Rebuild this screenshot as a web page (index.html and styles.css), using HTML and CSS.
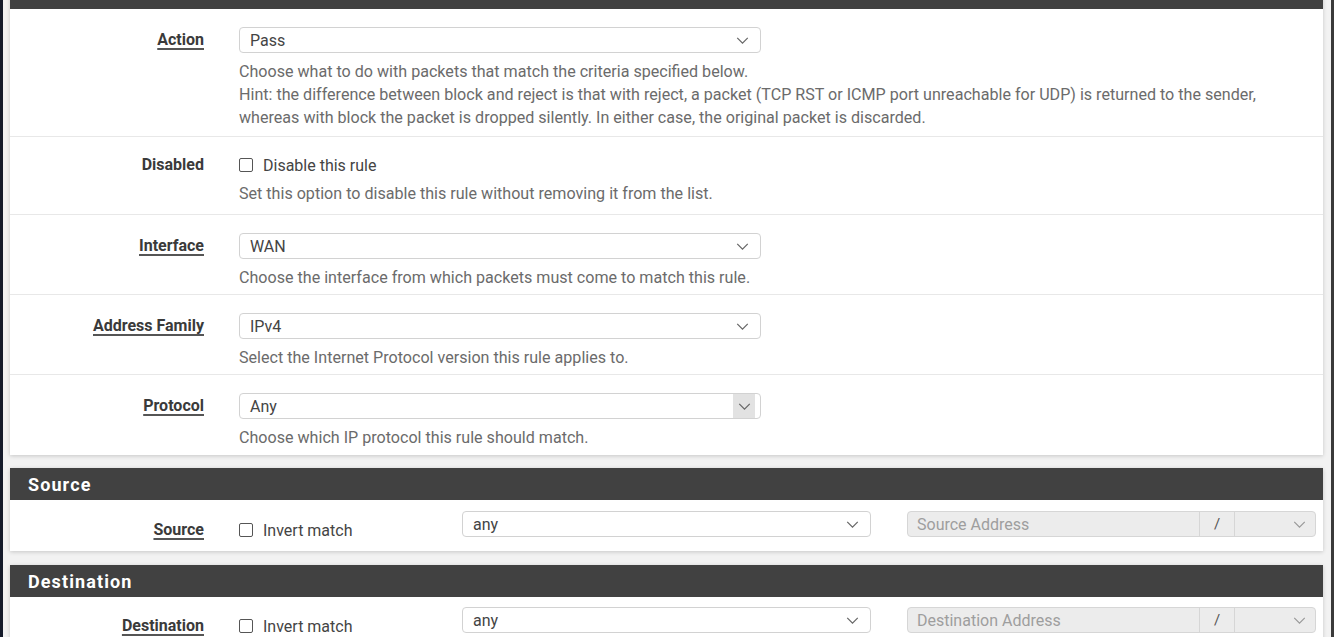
FILE: index.html
```html
<!DOCTYPE html>
<html lang="en">
<head>
<meta charset="utf-8">
<title>Edit Firewall Rule</title>
<link rel="stylesheet" href="styles.css">
</head>
<body>
<div class="page">
  <section class="panel panel-first">
    <div class="panel-heading"><h2>Edit Firewall Rule</h2></div>
    <div class="panel-body">
      <div class="row row-first">
        <div class="label"><span class="u">Action</span></div>
        <div class="control">
          <div class="select w-main"><span>Pass</span><svg class="chev" viewBox="0 0 14 8"><path d="M1 1l6 6 6-6"/></svg></div>
          <p class="help">Choose what to do with packets that match the criteria specified below.<br>Hint: the difference between block and reject is that with reject, a packet (TCP RST or ICMP port unreachable for UDP) is returned to the sender,<br>whereas with block the packet is dropped silently. In either case, the original packet is discarded.</p>
        </div>
      </div>
      <div class="row row-check">
        <div class="label label-check"><span>Disabled</span></div>
        <div class="control">
          <label class="check"><span class="box"></span>Disable this rule</label>
          <p class="help">Set this option to disable this rule without removing it from the list.</p>
        </div>
      </div>
      <div class="row">
        <div class="label"><span class="u">Interface</span></div>
        <div class="control">
          <div class="select w-main"><span>WAN</span><svg class="chev" viewBox="0 0 14 8"><path d="M1 1l6 6 6-6"/></svg></div>
          <p class="help">Choose the interface from which packets must come to match this rule.</p>
        </div>
      </div>
      <div class="row">
        <div class="label"><span class="u">Address Family</span></div>
        <div class="control">
          <div class="select w-main"><span>IPv4</span><svg class="chev" viewBox="0 0 14 8"><path d="M1 1l6 6 6-6"/></svg></div>
          <p class="help">Select the Internet Protocol version this rule applies to.</p>
        </div>
      </div>
      <div class="row row-last">
        <div class="label"><span class="u">Protocol</span></div>
        <div class="control">
          <div class="select w-main"><span>Any</span><span class="chev-box"><svg class="chev" viewBox="0 0 14 8"><path d="M1 1l6 6 6-6"/></svg></span></div>
          <p class="help">Choose which IP protocol this rule should match.</p>
        </div>
      </div>
    </div>
  </section>

  <section class="panel">
    <div class="panel-heading"><h2>Source</h2></div>
    <div class="panel-body">
      <div class="addr-row">
        <div class="label"><span class="u">Source</span></div>
        <label class="check check-addr"><span class="box"></span>Invert match</label>
        <div class="select w-type"><span>any</span><svg class="chev" viewBox="0 0 14 8"><path d="M1 1l6 6 6-6"/></svg></div>
        <div class="addr-group">
          <div class="addr-input">Source Address</div>
          <div class="addr-slash">/</div>
          <div class="addr-mask"><svg class="chev" viewBox="0 0 14 8"><path d="M1 1l6 6 6-6"/></svg></div>
        </div>
      </div>
    </div>
  </section>

  <section class="panel panel-dest">
    <div class="panel-heading"><h2>Destination</h2></div>
    <div class="panel-body">
      <div class="addr-row addr-row-dest">
        <div class="label"><span class="u">Destination</span></div>
        <label class="check check-addr"><span class="box"></span>Invert match</label>
        <div class="select w-type"><span>any</span><svg class="chev" viewBox="0 0 14 8"><path d="M1 1l6 6 6-6"/></svg></div>
        <div class="addr-group">
          <div class="addr-input">Destination Address</div>
          <div class="addr-slash">/</div>
          <div class="addr-mask"><svg class="chev" viewBox="0 0 14 8"><path d="M1 1l6 6 6-6"/></svg></div>
        </div>
      </div>
    </div>
  </section>
</div>
</body>
</html>
```

FILE: styles.css
```css
* { box-sizing: border-box; }
html, body { margin: 0; padding: 0; height: 100%; overflow: hidden; }
body {
  background: #f2f2f2;
  border-left: 3px solid #151b2b;
  border-right: 3px solid #3a3a3a;
  font-family: Roboto, "Liberation Sans", Arial, sans-serif;
  color: #333;
}
.page {
  padding: 0 8px 0 7px;
  display: flex;
  flex-direction: column;
  gap: 13px;
}
.panel {
  background: #fff;
  box-shadow: 0 1px 4px rgba(0,0,0,0.18);
}
.panel-first { margin-top: -23px; }
.panel-dest { margin-top: 1px; }
.panel-heading {
  background: #414141;
  height: 32px;
  display: flex;
  align-items: center;
  padding-left: 18px;
}
.panel-heading h2 {
  margin: 0;
  color: #fff;
  font-size: 18px;
  font-weight: 700;
  letter-spacing: 1.1px;
}
.row {
  display: grid;
  grid-template-columns: 229px 1fr;
  border-bottom: 1px solid #e8e8e8;
  padding: 18px 0 5px;
}
.row-first { padding-bottom: 7px; }
.row-last { border-bottom: none; padding-bottom: 6px; }
.row-check { padding-bottom: 9px; }
.label {
  text-align: right;
  padding-right: 35px;
  font-weight: 700;
  font-size: 16px;
  color: #3a3a3a;
  line-height: 26px;
  height: 26px;
}
.label-check { line-height: 20px; height: 20px; }
.u {
  text-decoration: underline;
  text-decoration-thickness: 2px;
  text-underline-offset: 3px;
  text-decoration-color: #555;
}
.control { min-width: 0; }
.select {
  height: 26px;
  border: 1px solid #d2d2d2;
  border-radius: 4px;
  background: #fff;
  display: flex;
  align-items: center;
  justify-content: space-between;
  padding: 0 11px 0 10px;
  font-size: 16px;
  color: #444;
}
.w-main { width: 522px; }
.chev {
  width: 13px;
  height: 7px;
  fill: none;
  stroke: #666;
  stroke-width: 1.4;
}
.chev-box {
  align-self: stretch;
  width: 22px;
  margin-right: -6px;
  background: #e2e2e2;
  display: flex;
  align-items: center;
  justify-content: center;
}
.help {
  margin: 7px 0 0;
  font-size: 16.1px;
  line-height: 23px;
  color: #6b6b6b;
}
.check {
  display: flex;
  align-items: center;
  height: 20px;
  font-size: 16px;
  color: #444;
  gap: 10px;
}
.box {
  width: 14px;
  height: 14px;
  border: 1px solid #555;
  border-radius: 2px;
  background: #fff;
  flex: none;
}
.addr-row {
  display: grid;
  grid-template-columns: 229px 223px 409px 409px;
  align-items: start;
  padding: 11px 0 11px;
}
.addr-row-dest { padding-top: 10px; }
.addr-row .label { line-height: 20px; height: 20px; margin-top: 9px; }
.check-addr { margin-top: 9px; }
.w-type { width: 409px; }
.addr-group {
  margin-left: 36px;
  width: 409px;
  height: 26px;
  display: flex;
  border: 1px solid #d6d6d6;
  border-radius: 4px;
  background: #ececec;
  overflow: hidden;
}
.addr-input {
  flex: 1;
  padding-left: 9px;
  font-size: 16px;
  color: #9e9e9e;
  display: flex;
  align-items: center;
}
.addr-slash {
  width: 36px;
  border-left: 1px solid #d6d6d6;
  border-right: 1px solid #d6d6d6;
  display: flex;
  align-items: center;
  justify-content: center;
  color: #555;
  font-size: 15px;
}
.addr-mask {
  width: 80px;
  display: flex;
  align-items: center;
  justify-content: flex-end;
  padding-right: 9px;
}
.addr-mask .chev { stroke: #999; }
```
